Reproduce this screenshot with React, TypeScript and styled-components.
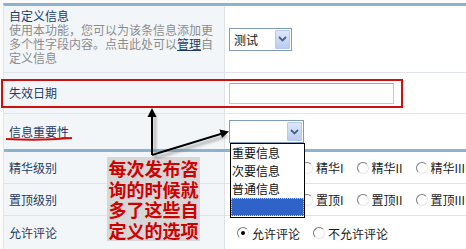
import React from 'react'
import styled, { createGlobalStyle } from 'styled-components'

const GlobalStyle = createGlobalStyle`
    body {
        margin: 0;
        background: #ffffff;
        font-family: 'Noto Sans CJK SC', 'Noto Sans', sans-serif;
        font-size: 12px;
    }
`;

const Page = styled.div`
    position: relative;
    width: 466px;
    height: 249px;
    overflow: hidden;
    background: #fbfbfb;
    padding-top: 3px;
    box-sizing: border-box;
`;

const Table = styled.div`
    margin-left: 3px;
    border-top: 3px solid #8db2cb;
    border-left: 1px solid #dfe5ec;
`;

const Row = styled.div<{ $h: number; $heavy?: boolean }>`
    display: grid;
    grid-template-columns: 221px 1fr;
    height: ${p => p.$h}px;
    border-bottom: ${p => (p.$heavy ? '3px solid #8db2cb' : '1px solid #dfe4ea')};
`;

const LabelCell = styled.div<{ $top?: boolean }>`
    background: #f3f6f9;
    border-right: 1px solid #dfe4ea;
    padding: ${p => (p.$top ? '3px 0 0 5px' : '0 0 0 5px')};
    display: flex;
    flex-direction: column;
    justify-content: ${p => (p.$top ? 'flex-start' : 'center')};
    line-height: 14px;
`;

const Label = styled.div`
    color: #1d3b68;
    font-size: 12px;
`;

const Desc = styled.p`
    margin: 0;
    color: #8c8c8c;
    font-size: 12px;
    line-height: 14px;
    width: 210px;
`;

const ManageLink = styled.a`
    color: #1d3b68;
    text-decoration: underline;
`;

const ValueCell = styled.div`
    background: #ffffff;
    display: flex;
    align-items: center;
    padding-left: 4px;
    color: #222;
    overflow: hidden;
    min-width: 0;
`;

const SelectBox = styled.div<{ $w: number }>`
    width: ${p => p.$w}px;
    height: 23px;
    box-sizing: border-box;
    border: 1px solid #7f9db9;
    background: #fff;
    display: flex;
    align-items: center;
    justify-content: space-between;
    padding: 0 1px 0 4px;
    font-size: 12px;
    color: #111;
`;

const SelectButton = styled.span`
    width: 15px;
    height: 19px;
    box-sizing: border-box;
    border: 1px solid #b7caeb;
    border-radius: 1px;
    background: linear-gradient(#dce7fb, #b9cdf3);
    display: flex;
    align-items: center;
    justify-content: center;
`;

const TextInput = styled.div`
    width: 165px;
    height: 21px;
    box-sizing: border-box;
    border: 1px solid #c8c8c8;
    border-top-color: #a9a9a9;
    background: #fff;
`;

const RadioGroup = styled.div<{ $indent: number }>`
    display: flex;
    align-items: center;
    padding-left: ${p => p.$indent}px;
    white-space: nowrap;
`;

const RadioItem = styled.label`
    display: flex;
    align-items: center;
    flex-shrink: 0;
    margin-right: 13px;
    color: #1a1a1a;
    font-size: 12px;
`;

const Radio = styled.span<{ $on?: boolean }>`
    position: relative;
    flex-shrink: 0;
    width: 10px;
    height: 10px;
    margin-right: 3px;
    border-radius: 50%;
    border: 1px solid;
    border-color: #7a7a7a #e8e8e8 #e8e8e8 #7a7a7a;
    background: #fff;
    &::after {
        content: '';
        display: ${p => (p.$on ? 'block' : 'none')};
        position: absolute;
        left: 3px;
        top: 3px;
        width: 4px;
        height: 4px;
        border-radius: 50%;
        background: #000;
    }
`;

const RedBox = styled.div`
    position: absolute;
    left: 1px;
    top: 79px;
    width: 402px;
    height: 29px;
    box-sizing: border-box;
    border: 2px solid #cc1111;
`;

const DropList = styled.div`
    position: absolute;
    left: 230px;
    top: 143px;
    width: 75px;
    height: 75px;
    box-sizing: border-box;
    border: 1px solid #000;
    background: #fff;
    display: flex;
    flex-direction: column;
`;

const DropItem = styled.div<{ $selected?: boolean }>`
    height: 18px;
    line-height: 18px;
    padding-left: 1px;
    font-size: 12px;
    color: #111;
    background: ${p => (p.$selected ? '#3063c7' : 'transparent')};
    ${p => (p.$selected ? 'outline: 1px dotted #c8d4f0; outline-offset: -1px;' : '')}
`;

const Caption = styled.div`
    position: absolute;
    left: 107px;
    top: 157px;
    width: 93px;
    height: 84px;
    background: #d7d7d7;
    color: #d00000;
    font-weight: 700;
    font-size: 18px;
    line-height: 20.5px;
    text-align: center;
    padding-top: 1px;
    box-sizing: border-box;
`;

const Overlay = styled.svg`
    position: absolute;
    left: 0;
    top: 0;
    pointer-events: none;
`;

const Chevron = () => (
    <svg width="9" height="6" viewBox="0 0 9 6">
        <path d="M1 1 L4.5 4.5 L8 1" fill="none" stroke="#4d6185" strokeWidth="1.8" />
    </svg>
);

const options = (prefix: string) => [prefix + 'I', prefix + 'II', prefix + 'III'];

const App: React.FC = () => {
    return (
        <>
            <GlobalStyle />
            <Page>
                <Table>
                    <Row $h={66}>
                        <LabelCell $top>
                            <Label>自定义信息</Label>
                            <Desc>
                                使用本功能，您可以为该条信息添加更多个性字段内容。点击此处可以<ManageLink>管理</ManageLink>自定义信息
                            </Desc>
                        </LabelCell>
                        <ValueCell>
                            <SelectBox $w={63}>
                                测试
                                <SelectButton><Chevron /></SelectButton>
                            </SelectBox>
                        </ValueCell>
                    </Row>
                    <Row $h={40}>
                        <LabelCell><Label>失效日期</Label></LabelCell>
                        <ValueCell><TextInput /></ValueCell>
                    </Row>
                    <Row $h={35} $heavy>
                        <LabelCell><Label>信息重要性</Label></LabelCell>
                        <ValueCell>
                            <SelectBox $w={75}>
                                <span />
                                <SelectButton><Chevron /></SelectButton>
                            </SelectBox>
                        </ValueCell>
                    </Row>
                    <Row $h={31}>
                        <LabelCell><Label>精华级别</Label></LabelCell>
                        <ValueCell>
                            <RadioGroup $indent={72}>
                                {options('精华').map(o => (
                                    <RadioItem key={o}><Radio />{o}</RadioItem>
                                ))}
                            </RadioGroup>
                        </ValueCell>
                    </Row>
                    <Row $h={31}>
                        <LabelCell><Label>置顶级别</Label></LabelCell>
                        <ValueCell>
                            <RadioGroup $indent={72}>
                                {options('置顶').map(o => (
                                    <RadioItem key={o}><Radio />{o}</RadioItem>
                                ))}
                            </RadioGroup>
                        </ValueCell>
                    </Row>
                    <Row $h={34}>
                        <LabelCell><Label>允许评论</Label></LabelCell>
                        <ValueCell>
                            <RadioGroup $indent={8}>
                                <RadioItem><Radio $on />允许评论</RadioItem>
                                <RadioItem><Radio />不允许评论</RadioItem>
                            </RadioGroup>
                        </ValueCell>
                    </Row>
                </Table>

                <RedBox />
                <DropList>
                    <DropItem>重要信息</DropItem>
                    <DropItem>次要信息</DropItem>
                    <DropItem>普通信息</DropItem>
                    <DropItem $selected />
                </DropList>
                <Caption>
                    每次发布咨<br />询的时候就<br />多了这些自<br />定义的选项
                </Caption>

                <Overlay width="466" height="249">
                    <defs>
                        <filter id="sh" x="-20%" y="-20%" width="160%" height="160%">
                            <feDropShadow dx="3" dy="3" stdDeviation="1.6" floodColor="#777" floodOpacity="0.7" />
                        </filter>
                    </defs>
                    <path d="M6 139 Q40 141 72 138" fill="none" stroke="#d01010" strokeWidth="2" />
                    <g filter="url(#sh)" stroke="#000" strokeWidth="2" fill="none">
                        <path d="M152 155 L152 112" />
                        <path d="M152 155 L224 133" />
                    </g>
                    <g fill="#000">
                        <path d="M152 108 L147.5 117 L156.5 117 Z" />
                        <path d="M229 131.5 L219.5 129.5 L222 138 Z" />
                    </g>
                </Overlay>
            </Page>
        </>
    )
}

export default App
